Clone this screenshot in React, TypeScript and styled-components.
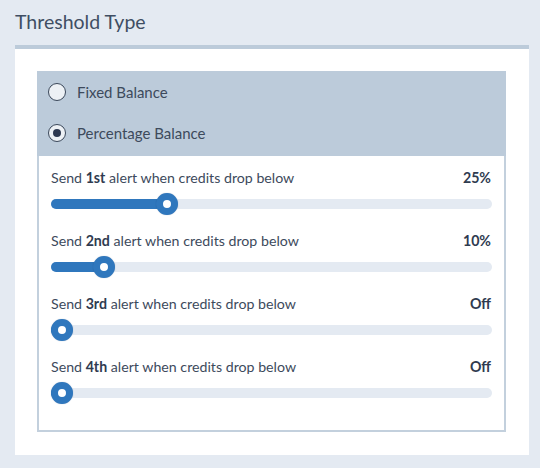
import React from "react";
import styled, { createGlobalStyle } from "styled-components";

const Global = createGlobalStyle`
  html, body { margin: 0; padding: 0; background: #e4eaf2; }
  body { font-family: Lato, "Open Sans", sans-serif; color: #3d4a5c; }
  * { box-sizing: border-box; }
`;

const Page = styled.div`
  width: 540px;
  height: 468px;
  padding: 10px 11px 0 15px;
  background: #e4eaf2;
`;

const Title = styled.h2`
  margin: 0 0 11px;
  font-size: 19.5px;
  line-height: 24px;
  font-weight: 400;
  color: #3f4e63;
`;

const Card = styled.div`
  background: #fff;
  border-top: 4px solid #bccbda;
  padding: 22px 23px 23px 22px;
`;

const Panel = styled.div`
  border: 2px solid #c3d0dd;
  border-top: none;
`;

const Header = styled.div`
  background: #bccbda;
  padding: 0 0 3px;
  margin: 0 -2px;
  padding-left: 2px;
`;

const Option = styled.label`
  display: flex;
  align-items: center;
  height: 41px;
  padding-left: 9px;
  gap: 11px;
  font-size: 15px;
  color: #3d4a5c;
  cursor: pointer;
`;

const Radio = styled.span<{ $checked?: boolean }>`
  width: 18px;
  height: 18px;
  border-radius: 50%;
  border: 1.5px solid #3a4759;
  background: #edf1f5;
  display: flex;
  align-items: center;
  justify-content: center;
  &::after {
    content: "";
    display: ${(p) => (p.$checked ? "block" : "none")};
    width: 8px;
    height: 8px;
    border-radius: 50%;
    background: #2c3850;
  }
`;

const Body = styled.div`
  padding: 12px 12px 26px;
  display: flex;
  flex-direction: column;
  gap: 16px;
`;

const Row = styled.div`
  display: flex;
  flex-direction: column;
  gap: 5px;
`;

const LabelLine = styled.div`
  display: flex;
  justify-content: space-between;
  font-size: 14.2px;
  line-height: 20px;
  color: #3d4a5c;
  b { font-weight: 700; color: #2f3b50; }
`;

const Value = styled.span`
  font-weight: 700;
  color: #2f3b50;
  padding-right: 1px;
`;

const SliderBox = styled.div`
  position: relative;
  height: 22px;
  display: flex;
  align-items: center;
`;

const Track = styled.div`
  position: relative;
  width: 100%;
  height: 10px;
  border-radius: 5px;
  background: #e4eaf2;
`;

const Fill = styled.div`
  position: absolute;
  left: 0;
  top: 0;
  bottom: 0;
  border-radius: 5px;
  background: #2f77bd;
`;

const Thumb = styled.div`
  position: absolute;
  top: 0;
  width: 22px;
  height: 22px;
  border-radius: 50%;
  background: #fff;
  border: 7px solid #2f77bd;
  box-shadow: 0 0 1px rgba(20, 60, 110, 0.4);
`;

const alerts = [
  { ord: "1st", value: 25, text: "25%" },
  { ord: "2nd", value: 10, text: "10%" },
  { ord: "3rd", value: 0, text: "Off" },
  { ord: "4th", value: 0, text: "Off" },
];

export default function App() {
  return (
    <>
      <Global />
      <Page>
        <Title>Threshold Type</Title>
        <Card>
          <Panel>
            <Header>
              <Option>
                <Radio />
                Fixed Balance
              </Option>
              <Option>
                <Radio $checked />
                Percentage Balance
              </Option>
            </Header>
            <Body>
              {alerts.map((a) => {
                const p = a.value / 100;
                return (
                  <Row key={a.ord}>
                    <LabelLine>
                      <span>
                        Send <b>{a.ord}</b> alert when credits drop below
                      </span>
                      <Value>{a.text}</Value>
                    </LabelLine>
                    <SliderBox>
                      <Track>
                        <Fill style={{ width: `calc(${p} * (100% - 22px) + 11px)` }} />
                      </Track>
                      <Thumb style={{ left: `calc(${p} * (100% - 22px))` }} />
                    </SliderBox>
                  </Row>
                );
              })}
            </Body>
          </Panel>
        </Card>
      </Page>
    </>
  );
}
